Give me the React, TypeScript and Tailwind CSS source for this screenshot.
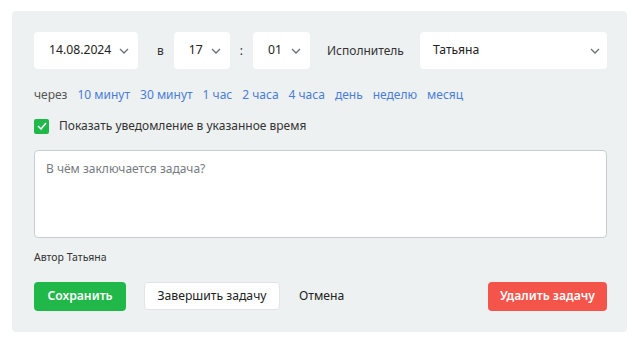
import React from "react";

function Chevron() {
  return (
    <svg width="10" height="6" viewBox="0 0 10 6" className="text-[#6b7075]">
      <polyline points="1,1 5,5 9,1" fill="none" stroke="currentColor" strokeWidth="1.3" />
    </svg>
  );
}

function Select({ value, className }: { value: string; className: string }) {
  return (
    <div
      className={`flex h-[37px] items-center justify-between rounded-[4px] bg-white pl-[15px] pr-[9px] text-[13px] text-[#222] ${className}`}
    >
      <span>{value}</span>
      <Chevron />
    </div>
  );
}

const quick = ["10 минут", "30 минут", "1 час", "2 часа", "4 часа", "день", "неделю", "месяц"];

export default function App() {
  return (
    <div className="h-[344px] w-[640px] bg-white pl-[12px] pt-[11px] font-['Noto_Sans',sans-serif] text-[12px]">
      <div className="flex h-[321px] w-[615px] flex-col rounded-[4px] bg-[#eef1f2] pl-[22px] pr-[20px] pt-[21px]">
        <div className="flex items-center text-[#333]">
          <Select value="14.08.2024" className="w-[104px] !text-[12.2px]" />
          <span className="ml-[19px] mr-[10px]">в</span>
          <Select value="17" className="w-[56px] !text-[12.2px]" />
          <span className="mx-[10px]">:</span>
          <Select value="01" className="w-[57px] !text-[12.2px]" />
          <span className="ml-[17px]">Исполнитель</span>
          <Select value="Татьяна" className="ml-auto w-[187px] !text-[12.2px] !pr-[7px] !pl-[13px]" />
        </div>

        <div className="mt-[16px] flex items-center gap-[10px] leading-[20px]">
          <span className="text-[#555]">через</span>
          {quick.map((q) => (
            <span key={q} className="text-[#4a7ed6]">
              {q}
            </span>
          ))}
        </div>

        <label className="mt-[12px] flex items-center gap-[10px] text-[#333]">
          <span className="flex h-[15px] w-[15px] items-center justify-center rounded-[2px] bg-[#21b84a]">
            <svg width="10" height="8" viewBox="0 0 10 8">
              <polyline points="1,4 4,7 9,1" fill="none" stroke="white" strokeWidth="1.5" />
            </svg>
          </span>
          Показать уведомление в указанное время
        </label>

        <div className="mt-[15px] h-[88px] rounded-[4px] border border-[#c9cdd1] bg-white px-[11px] pt-[9px] text-[#777c82]">
          В чём заключается задача?
        </div>

        <div className="mt-[12px] text-[10.5px] text-[#333]">Автор Татьяна</div>

        <div className="mt-[16px] flex items-center">
          <button className="h-[29px] w-[92px] rounded-[4px] bg-[#21b84a] text-[12.2px] font-semibold text-white">
            Сохранить
          </button>
          <button className="ml-[18px] h-[28px] w-[136px] rounded-[4px] border border-[#e2e5e7] bg-white text-[12.2px] text-[#222]">
            Завершить задачу
          </button>
          <span className="ml-[19px] text-[12.2px] text-[#222]">Отмена</span>
          <button className="ml-auto h-[29px] w-[119px] rounded-[4px] bg-[#f5544a] text-[12.2px] font-semibold text-white">
            Удалить задачу
          </button>
        </div>
      </div>
    </div>
  );
}
